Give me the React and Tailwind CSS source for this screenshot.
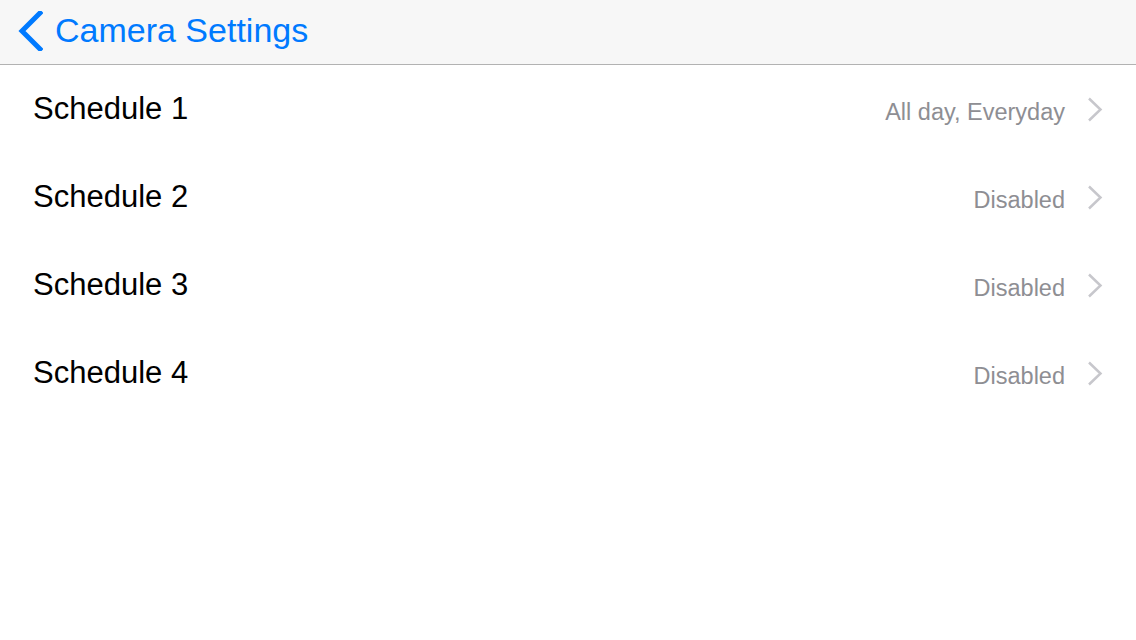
const schedules = [
  { name: "Schedule 1", status: "All day, Everyday" },
  { name: "Schedule 2", status: "Disabled" },
  { name: "Schedule 3", status: "Disabled" },
  { name: "Schedule 4", status: "Disabled" },
];

const App = () => {
  return (
    <div className="w-[1136px] h-[640px] bg-white font-['Liberation_Sans',Arial,sans-serif] overflow-hidden">
      <header className="h-[65px] bg-[#f7f7f7] border-b border-[#b2b2b2] flex items-center pl-[17px]">
        <svg width="26" height="40" viewBox="0 0 26 40" className="mr-[12px] -mt-[2px]">
          <path d="M23 2 L5 20 L23 38" fill="none" stroke="#007aff" strokeWidth="5" strokeLinecap="square" strokeLinejoin="miter" />
        </svg>
        <h1 className="text-[34px] text-[#007aff] leading-none -mt-[4px]">Camera Settings</h1>
      </header>

      <ul>
        {schedules.map((s, i) => (
          <li key={i} className="h-[88px] flex items-center pl-[33px] pr-[33px]">
            <span className="text-[31px] text-black flex-1">{s.name}</span>
            <span className="text-[23.5px] text-[#8e8e93] mr-[22px] mt-[8px]">{s.status}</span>
            <svg width="16" height="25" viewBox="0 0 16 25" className="mt-[1px]">
              <path d="M2 1.5 L13.5 12.5 L2 23.5" fill="none" stroke="#c7c7cc" strokeWidth="2.5" />
            </svg>
          </li>
        ))}
      </ul>
    </div>
  );
};

export default App;
